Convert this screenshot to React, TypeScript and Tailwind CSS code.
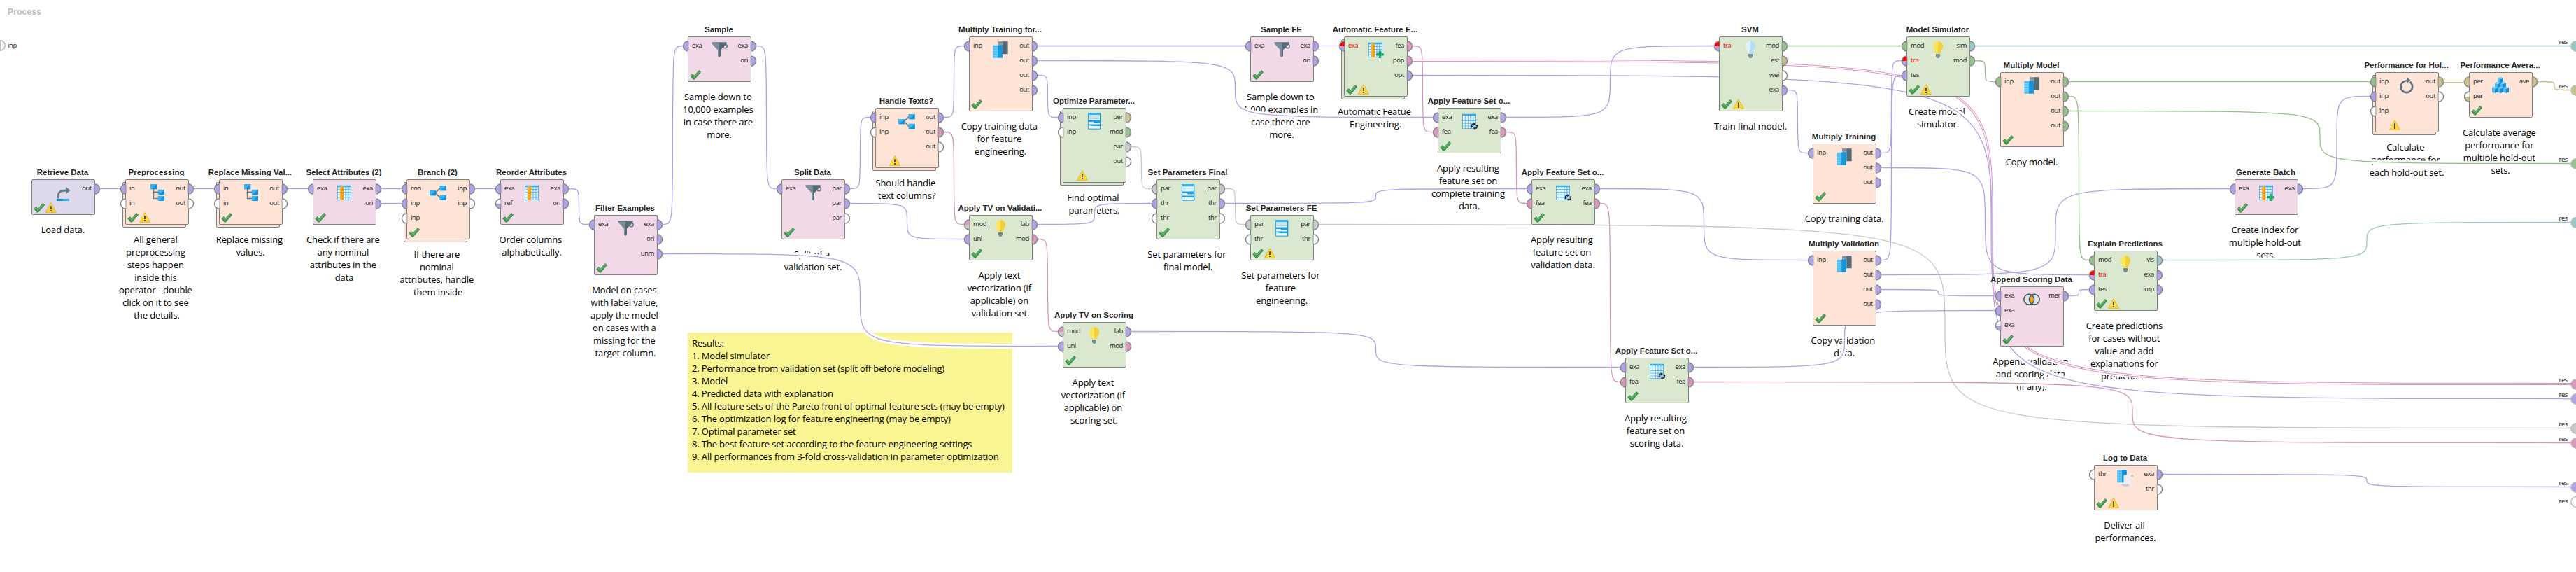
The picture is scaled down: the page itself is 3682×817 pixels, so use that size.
import React from 'react';

type Tone = 'data' | 'model' | 'fea' | 'perf' | 'io' | 'param' | 'none' | 'error';
type IconName = 'retrieve' | 'tree' | 'columns' | 'branch' | 'funnel' | 'stack' | 'form' | 'bulb' | 'coldBulb' | 'tablePlus' | 'tableSync' | 'venn' | 'loop' | 'cubes' | 'log';
type Port = { t: string; c: Tone; top?: Tone };
type Op = {
  id: string; x: number; y: number; h: number; bg: string; title: string; icon: IconName;
  ins: Port[]; outs: Port[]; ok?: boolean; warn?: boolean; sub?: boolean; note: string[];
};

const TONE: Record<Tone, string> = {
  data: '#b1a2e8', model: '#95bf8c', fea: '#d996be', perf: '#c9c08f', io: '#97c6cb', param: '#c9c9c9', none: '#ffffff', error: '#ff0000',
};
const PINK = 'bg-[#f1d9e7]';
const PEACH = 'bg-[#fde4d7]';
const GREEN = 'bg-[#d9e8ce]';
const LILAC = 'bg-[#ddd9ea]';

const p = (list: string): Port[] =>
  list ? list.split(' ').map((s) => { const [t, c, top] = s.split(':'); return { t, c: c as Tone, top: top as Tone | undefined }; }) : [];

const OPS: Op[] = [
  { id: 'ret', x: 45, y: 256, h: 51, bg: LILAC, title: 'Retrieve Data', icon: 'retrieve', ins: [], outs: p('out:data'), ok: true, warn: true, note: ['Load data.'] },
  { id: 'pre', x: 179, y: 256, h: 65, bg: PEACH, title: 'Preprocessing', icon: 'tree', ins: p('in:data in:none'), outs: p('out:data out:none'), ok: true, warn: true, sub: true, note: ['All general', 'preprocessing', 'steps happen', 'inside this', 'operator - double', 'click on it to see', 'the details.'] },
  { id: 'rep', x: 313, y: 256, h: 65, bg: PEACH, title: 'Replace Missing Val...', icon: 'tree', ins: p('in:data in:none'), outs: p('out:data out:none'), ok: true, sub: true, note: ['Replace missing', 'values.'] },
  { id: 'sel', x: 447, y: 256, h: 65, bg: PINK, title: 'Select Attributes (2)', icon: 'columns', ins: p('exa:data'), outs: p('exa:data ori:data'), ok: true, note: ['Check if there are', 'any nominal', 'attributes in the', 'data'] },
  { id: 'bra', x: 581, y: 256, h: 86, bg: PEACH, title: 'Branch (2)', icon: 'branch', ins: p('con:data inp:data inp:none'), outs: p('inp:data inp:none'), ok: true, sub: true, note: ['If there are', 'nominal', 'attributes, handle', 'them inside'] },
  { id: 'reo', x: 715, y: 256, h: 65, bg: PINK, title: 'Reorder Attributes', icon: 'columns', ins: p('exa:data ref:data:none'), outs: p('exa:data ori:data'), ok: true, note: ['Order columns', 'alphabetically.'] },
  { id: 'fil', x: 849, y: 307, h: 86, bg: PINK, title: 'Filter Examples', icon: 'funnel', ins: p('exa:data'), outs: p('exa:data ori:data unm:data'), ok: true, note: ['Model on cases', 'with label value,', 'apply the model', 'on cases with a', 'missing for the', 'target column.'] },
  { id: 'sam', x: 983, y: 52, h: 65, bg: PINK, title: 'Sample', icon: 'funnel', ins: p('exa:data'), outs: p('exa:data ori:data'), ok: true, note: ['Sample down to', '10,000 examples', 'in case there are', 'more.'] },
  { id: 'spl', x: 1117, y: 256, h: 86, bg: PINK, title: 'Split Data', icon: 'funnel', ins: p('exa:data'), outs: p('par:data par:data par:none'), ok: true, note: ['Split of a', 'validation set.'] },
  { id: 'han', x: 1251, y: 154, h: 86, bg: PEACH, title: 'Handle Texts?', icon: 'branch', ins: p('inp:data inp:none'), outs: p('out:data out:fea out:none'), warn: true, sub: true, note: ['Should handle', 'text columns?'] },
  { id: 'mfe', x: 1385, y: 52, h: 107, bg: PEACH, title: 'Multiply Training for...', icon: 'stack', ins: p('inp:data'), outs: p('out:data out:data out:data out:data'), ok: true, note: ['Copy training data', 'for feature', 'engineering.'] },
  { id: 'opt', x: 1519, y: 154, h: 107, bg: GREEN, title: 'Optimize Parameter...', icon: 'form', ins: p('inp:data inp:none'), outs: p('per:perf mod:model par:param out:none'), warn: true, sub: true, note: ['Find optimal', 'parameters.'] },
  { id: 'tvv', x: 1385, y: 307, h: 65, bg: GREEN, title: 'Apply TV on Validati...', icon: 'bulb', ins: p('mod:param:fea unl:data'), outs: p('lab:data mod:fea'), ok: true, note: ['Apply text', 'vectorization (if', 'applicable) on', 'validation set.'] },
  { id: 'tvs', x: 1519, y: 460, h: 65, bg: GREEN, title: 'Apply TV on Scoring', icon: 'bulb', ins: p('mod:param:fea unl:data'), outs: p('lab:data mod:fea'), ok: true, note: ['Apply text', 'vectorization (if', 'applicable) on', 'scoring set.'] },
  { id: 'spf', x: 1653, y: 256, h: 86, bg: GREEN, title: 'Set Parameters Final', icon: 'form', ins: p('par:param thr:data thr:none'), outs: p('par:param thr:data thr:none'), ok: true, note: ['Set parameters for', 'final model.'] },
  { id: 'spe', x: 1787, y: 307, h: 65, bg: GREEN, title: 'Set Parameters FE', icon: 'form', ins: p('par:param thr:none'), outs: p('par:param thr:none'), ok: true, warn: true, note: ['Set parameters for', 'feature', 'engineering.'] },
  { id: 'sfe', x: 1787, y: 52, h: 65, bg: PINK, title: 'Sample FE', icon: 'funnel', ins: p('exa:data'), outs: p('exa:data ori:data'), ok: true, note: ['Sample down to', '1,000 examples in', 'case there are', 'more.'] },
  { id: 'afe', x: 1921, y: 52, h: 86, bg: GREEN, title: 'Automatic Feature E...', icon: 'tablePlus', ins: p('exa:data:error'), outs: p('fea:fea pop:fea opt:data'), ok: true, warn: true, sub: true, note: ['Automatic Featue', 'Engineering.'] },
  { id: 'fs1', x: 2055, y: 154, h: 65, bg: GREEN, title: 'Apply Feature Set o...', icon: 'tableSync', ins: p('exa:data fea:fea'), outs: p('exa:data fea:fea'), ok: true, note: ['Apply resulting', 'feature set on', 'complete training', 'data.'] },
  { id: 'fs2', x: 2189, y: 256, h: 65, bg: GREEN, title: 'Apply Feature Set o...', icon: 'tableSync', ins: p('exa:data fea:fea'), outs: p('exa:data fea:fea'), ok: true, note: ['Apply resulting', 'feature set on', 'validation data.'] },
  { id: 'fs3', x: 2323, y: 511, h: 65, bg: GREEN, title: 'Apply Feature Set o...', icon: 'tableSync', ins: p('exa:data fea:fea'), outs: p('exa:data fea:fea'), ok: true, note: ['Apply resulting', 'feature set on', 'scoring data.'] },
  { id: 'svm', x: 2457, y: 52, h: 107, bg: GREEN, title: 'SVM', icon: 'coldBulb', ins: p('tra:data:error'), outs: p('mod:model est:perf wei:none exa:data'), ok: true, warn: true, note: ['Train final model.'] },
  { id: 'mtr', x: 2591, y: 205, h: 86, bg: PEACH, title: 'Multiply Training', icon: 'stack', ins: p('inp:data'), outs: p('out:data out:data out:data'), ok: true, note: ['Copy training data.'] },
  { id: 'mva', x: 2591, y: 358, h: 107, bg: PEACH, title: 'Multiply Validation', icon: 'stack', ins: p('inp:data'), outs: p('out:data out:data out:data out:data'), ok: true, note: ['Copy validation', 'data.'] },
  { id: 'sim', x: 2725, y: 52, h: 86, bg: GREEN, title: 'Model Simulator', icon: 'bulb', ins: p('mod:model tra:data:error tes:data'), outs: p('sim:io mod:model'), ok: true, warn: true, note: ['Create model', 'simulator.'] },
  { id: 'mmo', x: 2859, y: 103, h: 107, bg: PEACH, title: 'Multiply Model', icon: 'stack', ins: p('inp:model'), outs: p('out:model out:model out:model out:model'), ok: true, note: ['Copy model.'] },
  { id: 'app', x: 2859, y: 409, h: 86, bg: PINK, title: 'Append Scoring Data', icon: 'venn', ins: p('exa:data exa:data exa:data:none'), outs: p('mer:data'), ok: true, note: ['Append validation', 'and scoring data', '(if any).'] },
  { id: 'exp', x: 2993, y: 358, h: 86, bg: GREEN, title: 'Explain Predictions', icon: 'bulb', ins: p('mod:model tra:data:error tes:data'), outs: p('vis:io exa:data imp:data'), ok: true, warn: true, note: ['Create predictions', 'for cases without', 'value and add', 'explanations for', 'predictions.'] },
  { id: 'log', x: 2993, y: 664, h: 65, bg: PEACH, title: 'Log to Data', icon: 'log', ins: p('thr:none'), outs: p('exa:data thr:none'), ok: true, warn: true, note: ['Deliver all', 'performances.'] },
  { id: 'gen', x: 3194, y: 256, h: 51, bg: PINK, title: 'Generate Batch', icon: 'tablePlus', ins: p('exa:data'), outs: p('exa:data'), ok: true, note: ['Create index for', 'multiple hold-out', 'sets.'] },
  { id: 'pho', x: 3395, y: 103, h: 86, bg: PEACH, title: 'Performance for Hol...', icon: 'loop', ins: p('inp:model inp:data inp:none'), outs: p('out:perf out:none'), warn: true, sub: true, note: ['Calculate', 'performance for', 'each hold-out set.'] },
  { id: 'pav', x: 3529, y: 103, h: 65, bg: PEACH, title: 'Performance Avera...', icon: 'cubes', ins: p('per:perf per:perf:none'), outs: p('ave:perf'), ok: true, note: ['Calculate average', 'performance for', 'multiple hold-out', 'sets.'] },
];

const RESULTS: { y: number; c: Tone }[] = [
  { y: 65.5, c: 'io' }, { y: 128.5, c: 'perf' }, { y: 233.5, c: 'model' }, { y: 317.5, c: 'io' }, { y: 548.5, c: 'fea' },
  { y: 569.5, c: 'data' }, { y: 611.5, c: 'param' }, { y: 632.5, c: 'fea' }, { y: 695.5, c: 'data' }, { y: 716.5, c: 'none' },
];

// "operator.port > operator.port"; the target "res.n" is the n-th result port on the right edge.
const WIRES = [
  'ret.0>pre.0', 'pre.0>rep.0', 'rep.0>sel.0', 'sel.0>bra.0', 'sel.1>bra.1', 'bra.0>reo.0', 'reo.0>fil.0', 'fil.0>sam.0',
  'fil.2>tvs.1', 'sam.0>spl.0', 'spl.0>han.0', 'spl.1>tvv.1', 'han.0>mfe.0', 'han.1>tvv.0', 'tvv.1>tvs.0', 'mfe.0>sfe.0',
  'mfe.1>fs1.0', 'mfe.2>opt.0', 'opt.2>spf.0', 'tvv.0>spf.1', 'spf.0>spe.0', 'spf.1>fs2.0', 'spe.0>res.6', 'sfe.0>afe.0',
  'afe.0>fs1.1', 'afe.1>res.4*', 'afe.2>res.5', 'fs1.0>svm.0', 'fs1.1>fs2.1', 'fs2.0>mva.0', 'fs2.1>fs3.1', 'tvs.0>fs3.0',
  'fs3.0>app.1', 'fs3.1>res.7', 'svm.0>sim.0', 'svm.3>mtr.0', 'mtr.0>sim.1', 'mtr.1>exp.1', 'mva.0>sim.2', 'mva.1>gen.0',
  'mva.2>app.0', 'app.0>exp.2', 'sim.0>res.0', 'sim.1>mmo.0', 'mmo.0>pho.0', 'mmo.1>exp.0', 'mmo.2>res.2', 'gen.0>pho.1',
  'pho.0>pav.0*', 'pav.0>res.1', 'exp.0>res.3', 'log.0>res.8',
];

const byId = new Map(OPS.map((o) => [o.id, o]));

const PATHS = WIRES.map((w) => {
  const double = w.endsWith('*');
  const [from, to] = w.replace('*', '').split('>');
  const [fi, fp] = from.split('.');
  const [ti, tp] = to.split('.');
  const a = byId.get(fi)!;
  const x1 = a.x + 98;
  const y1 = a.y + 13.5 + 21 * Number(fp);
  const b = byId.get(ti);
  const x2 = b ? b.x - 7 : 3675;
  const y2 = b ? b.y + 13.5 + 21 * Number(tp) : RESULTS[Number(tp)].y;
  const cx = (x1 + x2) / 2;
  const cy = (y1 + y2) / 2;
  const d = y1 === y2
    ? `M${x1} ${y1}H${x2}`
    : `M${x1} ${y1}C${cx} ${y1} ${cx} ${y1} ${cx} ${cy}C${cx} ${y2} ${cx} ${y2} ${x2} ${y2}`;
  return { key: w, d, double, color: TONE[a.outs[Number(fp)].c] };
});

function Wires() {
  return (
    <svg className="absolute top-0 left-0" width="3682" height="817" viewBox="0 0 3682 817" fill="none">
      <g stroke="#fff" strokeWidth="7">
        {PATHS.map((w) => <path key={w.key} d={w.d} />)}
      </g>
      {PATHS.map((w) => (
        <g key={w.key}>
          <path d={w.d} stroke={w.color} strokeWidth={w.double ? 3.2 : 1.3} />
          {w.double && <path d={w.d} stroke="#fff" strokeWidth="1.2" />}
        </g>
      ))}
    </svg>
  );
}

function HalfPort({ side, port }: { side: 'l' | 'r'; port: Port }) {
  const cx = side === 'l' ? 8.5 : 0.5;
  const sweep = side === 'l' ? 0 : 1;
  const ex = side === 'l' ? 1.5 : 7.5;
  return (
    <svg width="9" height="16" viewBox="0 0 9 16" className={side === 'l' ? '-ml-[9px] shrink-0 overflow-visible' : '-mr-[9px] shrink-0 overflow-visible'}>
      <path d={`M${cx} 1A7 7 0 0 ${sweep} ${cx} 15Z`} fill={TONE[port.c]} />
      {port.top && <path d={`M${cx} 1A7 7 0 0 ${sweep} ${ex} 8H${cx}Z`} fill={TONE[port.top]} />}
      <path d={side === 'l' ? 'M9.5 1.5V14.5' : 'M-.5 1.5V14.5'} stroke="#8b84a0" strokeOpacity=".35" />
      <path d={`M${cx} 1A7 7 0 0 ${sweep} ${cx} 15`} fill="none" stroke="#868686" strokeWidth="1.4" />
    </svg>
  );
}

function Table({ orange }: { orange?: boolean }) {
  return (
    <g>
      <rect x="2" y="2.7" width="20" height="21.3" fill="#fff" />
      <rect x="13" y="5" width="9" height="19" fill="#dff2fd" />
      <path d="M2.5 5V24M6.3 5V24M10.3 5V24M14 5V24M17.8 5V24M21.5 5V24M2 8.5H22M2 12.5H22M2 16.2H22M2 20H22M2 23.5H22" stroke="#4ab5ee" strokeWidth=".9" />
      <rect x="2" y="2.7" width="20" height="2.6" fill="#35ade8" />
      {orange && <><rect x="6" y="4" width="5.3" height="20" fill="#f49b0f" /><rect x="6" y="4" width="2.4" height="20" fill="#fbb034" /></>}
    </g>
  );
}

function Tile({ x, y }: { x: number; y: number }) {
  return (
    <g>
      <rect x={x} y={y} width="9.2" height="7.2" fill="#36b4f0" />
      <path d={`M${x + 9.2} ${y}V${y + 7.2}H${x + 1}Z`} fill="#1590d8" />
    </g>
  );
}

function Slab({ x, y, l, r }: { x: number; y: number; l: string; r: string }) {
  return (
    <g>
      <rect x={x} y={y} width="7" height="18" fill={l} />
      <rect x={x + 6.8} y={y} width="6.8" height="18" fill={r} />
      <path d={`M${x} ${y + 3.8}h6.5M${x} ${y + 7.4}h6.5M${x} ${y + 11}h6.5M${x} ${y + 14.6}h6.5`} stroke="#fff" strokeOpacity=".45" strokeWidth=".7" />
    </g>
  );
}

function Cube({ x, y }: { x: number; y: number }) {
  return (
    <g>
      <path d={`M${x} ${y + 1.8}L${x + 4} ${y}L${x + 8} ${y + 1.8}L${x + 4} ${y + 3.4}Z`} fill="#74c9f4" />
      <path d={`M${x} ${y + 1.8}L${x + 4} ${y + 3.4}V${y + 9.6}L${x} ${y + 8}Z`} fill="#4cb9ef" />
      <path d={`M${x + 8} ${y + 1.8}L${x + 4} ${y + 3.4}V${y + 9.6}L${x + 8} ${y + 8}Z`} fill="#118ed6" />
    </g>
  );
}

function Bulb({ a, b }: { a: string; b: string }) {
  return (
    <g>
      <path d="M12 1A7.2 7.4 0 0 0 4.8 8.4C4.8 12 8 14 8.4 18.6H12Z" fill={a} />
      <path d="M12 1A7.2 7.4 0 0 1 19.2 8.4C19.2 12 16 14 15.6 18.6H12Z" fill={b} />
      <path d="M9 19h6v3.6L13.4 25h-2.8L9 22.6Z" fill="#78909c" />
      <path d="M9 20.8h6" stroke="#5f7682" strokeWidth=".8" />
    </g>
  );
}

function Drawing({ name }: { name: IconName }) {
  switch (name) {
    case 'retrieve':
      return (
        <g>
          <path d="M5 21.5V19C5 12 9 10 17 10" fill="none" stroke="#607d8b" strokeWidth="2.8" />
          <path d="M16.5 5L22.3 10L16.5 15Z" fill="#607d8b" />
          <rect x="3" y="22" width="18" height="3" fill="#29b0f0" /><rect x="3" y="22" width="9" height="3" fill="#0a8ad8" />
        </g>
      );
    case 'tree':
      return (
        <g>
          <path d="M7.5 8V21.5H14M7.5 12.3H14" fill="none" stroke="#6f7b82" strokeWidth="1.4" />
          <Tile x={3} y={1} /><Tile x={13.8} y={8.8} /><Tile x={13.8} y={17.8} />
        </g>
      );
    case 'columns': return <Table orange />;
    case 'branch':
      return (
        <g>
          <path d="M15 6.5L8.5 13.5L15 20.5" fill="none" stroke="#5f6e76" strokeWidth="1.3" />
          <Tile x={0} y={10} /><Tile x={14.4} y={3} /><Tile x={14.4} y={16.7} />
        </g>
      );
    case 'funnel':
      return (
        <g>
          <circle cx="20.4" cy="8" r="2.8" fill="none" stroke="#607580" strokeWidth="1.5" />
          <path d="M1.5 2.5H12V24.2L10 22.5V13.5L1.5 4.5Z" fill="#78909c" />
          <path d="M12 2.5H22.5V4.5L14 13.5V22L12 24.2Z" fill="#546a76" />
          <path d="M1.5 3h21" stroke="#5b707b" strokeWidth="1" />
        </g>
      );
    case 'stack':
      return <g><Slab x={9} y={1.2} l="#78909c" r="#546a76" /><Slab x={1.3} y={6.7} l="#4fc0f5" r="#1296dd" /></g>;
    case 'form':
      return (
        <g>
          <rect x="3.5" y="1.8" width="17" height="22.4" fill="#eaf7fe" stroke="#35ade8" strokeWidth="1.2" />
          <rect x="3" y="1.2" width="18" height="3" fill="#35b5f2" />
          <path d="M5 7H19M5 9.6H19" stroke="#8fd0f3" strokeWidth=".9" />
          <path d="M4 11.5H20V15.5H12L4 14Z" fill="#1e9fe3" />
          <rect x="5" y="14.2" width="6" height="2" fill="#fff" />
          <path d="M4 17.6H20V20H11L4 19Z" fill="#1e9fe3" />
          <path d="M20.8 2V24" stroke="#1590d8" strokeWidth="1" />
        </g>
      );
    case 'bulb': return <Bulb a="#f9e560" b="#f3cf3a" />;
    case 'coldBulb': return <Bulb a="#def2fd" b="#b0e0fa" />;
    case 'tablePlus':
      return <g><Table orange /><path d="M16.8 14.6h3.4v3.4h3.6v3.4h-3.6v3.6h-3.4v-3.6h-3.6v-3.4h3.6Z" fill="#1fae62" /></g>;
    case 'tableSync':
      return (
        <g>
          <Table />
          <path d="M18.6 17.3h-1.1a1.8 1.8 0 0 0-1.8 1.8v2.3M20.2 23.1h1.1a1.8 1.8 0 0 0 1.8-1.8v-2.3" fill="none" stroke="#222" strokeWidth="1.5" />
          <path d="M18.3 15.2l2.7 2.1-2.7 2.1ZM20.5 25.2l-2.7-2.1 2.7-2.1Z" fill="#222" />
          <path d="M14 20.6h3.4l-1.7 2.2ZM21.4 19.8h3.4l-1.7-2.2Z" fill="#222" />
        </g>
      );
    case 'venn':
      return (
        <g>
          <circle cx="8.2" cy="12.7" r="7.4" fill="#dfe6ea" /><circle cx="15.8" cy="12.7" r="7.4" fill="#dfe6ea" />
          <path d="M12 6.4A7.4 7.4 0 0 1 12 19A7.4 7.4 0 0 1 12 6.4Z" fill="#f5a31a" />
          <circle cx="8.2" cy="12.7" r="7.4" fill="none" stroke="#455a64" strokeWidth="1.5" />
          <circle cx="15.8" cy="12.7" r="7.4" fill="none" stroke="#455a64" strokeWidth="1.5" />
        </g>
      );
    case 'loop':
      return (
        <g>
          <path d="M8.5 7.2A8.3 8.3 0 1 0 16.5 7.9" fill="none" stroke="#5c727e" strokeWidth="2.6" />
          <path d="M8 7.2L12 6.2" stroke="#5c727e" strokeWidth="2.4" />
          <path d="M12 1.2L17.4 5.4L12 10.2Z" fill="#5c727e" />
        </g>
      );
    case 'cubes':
      return <g><Cube x={8} y={0.8} /><Cube x={4} y={7.6} /><Cube x={12} y={7.6} /><Cube x={0} y={14.4} /><Cube x={8} y={14.4} /><Cube x={16} y={14.4} /></g>;
    case 'log':
      return (
        <g>
          <Slab x={0.2} y={1.3} l="#4fc0f5" r="#1296dd" />
          <path d="M9.5 9.5Q9.5 8 11 8H22Q20 8.5 20 10.5V22H9.5Z" fill="#eceff1" />
          <path d="M22 8q1.6.6 1.2 2.8H20Q20 8.4 22 8Z" fill="#b0bec5" />
          <path d="M6.5 21.8H17V24.4H8.2Q6.5 24 6.5 21.8Z" fill="#c3ced4" />
        </g>
      );
  }
}

function Check() {
  return (
    <svg width="16" height="14" viewBox="0 0 16 14">
      <path d="M.8 8.2L3.8 5.6L6.3 8.4L13 .6L15.6 2.8L6.6 13.2L4.6 13Z" fill="#43a053" stroke="#2f7d3e" strokeWidth=".8" />
      <path d="M2 8L3.8 6.7L6.4 9.7L13.2 1.9" fill="none" stroke="#7cc784" strokeWidth=".9" />
    </svg>
  );
}

function Warn() {
  return (
    <svg width="16" height="15" viewBox="0 0 16 15">
      <path d="M8 .6L15.6 14.4H.4Z" fill="#fbd63c" stroke="#e0b420" strokeWidth=".8" strokeLinejoin="round" />
      <path d="M8 5.2V10" stroke="#4a4a4a" strokeWidth="1.9" /><path d="M8 11V13" stroke="#4a4a4a" strokeWidth="1.9" />
    </svg>
  );
}

const LABEL = 'pb-[1.5px] text-[9.5px] leading-[15px] tracking-[-0.4px]';

function PortRow({ side, port }: { side: 'l' | 'r'; port: Port }) {
  const tone = port.top === 'error' ? 'text-[#ff0000]' : 'text-[#1c1c1c]';
  return side === 'l' ? (
    <div className="flex h-[21px] items-center gap-[5px]">
      <HalfPort side="l" port={port} />
      <span className={`${LABEL} ${tone}`}>{port.t}</span>
    </div>
  ) : (
    <div className="flex h-[21px] items-center justify-end gap-1">
      <span className={`${LABEL} ${tone}`}>{port.t}</span>
      <HalfPort side="r" port={port} />
    </div>
  );
}

function Operator({ op }: { op: Op }) {
  return (
    <div className="absolute w-[91px]" style={{ left: op.x, top: op.y, height: op.h }}>
      {op.sub && <div className={`absolute top-1 -left-1 h-full w-full rounded-[2px] border border-[#7f7f7f] ${op.bg}`} />}
      <div className="absolute inset-x-0 -top-[17px] flex justify-center pr-[2px]">
        <span className="text-[11.5px] leading-[14px] font-bold whitespace-nowrap text-[#262626] [font-family:'Liberation_Sans',Arial,sans-serif]">{op.title}</span>
      </div>
      <div className={`relative flex h-full justify-between rounded-[2px] border border-[#7f7f7f] pt-[2px] ${op.bg}`}>
        <div className="flex flex-col">{op.ins.map((q, i) => <PortRow key={i} side="l" port={q} />)}</div>
        <div className="flex flex-col">{op.outs.map((q, i) => <PortRow key={i} side="r" port={q} />)}</div>
        <svg className="absolute top-[5px] left-8 overflow-visible" width="24" height="26" viewBox="0 0 24 26"><Drawing name={op.icon} /></svg>
        <div className="absolute bottom-[2px] left-[2px] flex h-[15px] items-center gap-px">
          <div className="w-4">{op.ok && <Check />}</div>
          {op.warn && <Warn />}
        </div>
      </div>
    </div>
  );
}

function Comment({ op }: { op: Op }) {
  return (
    <div className="absolute flex w-[130px] flex-col items-center" style={{ left: op.x - 20, top: op.y + op.h + 12 }}>
      {op.note.map((line, i) => (
        <span key={i} className="text-[13px] leading-[18px] tracking-[-0.1px] whitespace-pre text-black">
          {i < op.note.length - 1 ? line + ' ' : line}
        </span>
      ))}
    </div>
  );
}

const NOTES = [
  'Results:',
  '1. Model simulator',
  '2. Performance from validation set (split off before modeling)',
  '3. Model',
  '4. Predicted data with explanation',
  '5. All feature sets of the Pareto front of optimal feature sets (may be empty)',
  '6. The optimization log for feature engineering (may be empty)',
  '7. Optimal parameter set',
  '8. The best feature set according to the feature engineering settings',
  '9. All performances from 3-fold cross-validation in parameter optimization',
];

export default function App() {
  return (
    <main className="relative h-[817px] w-[3682px] overflow-hidden bg-white [font-family:'Open_Sans','Noto_Sans',sans-serif]">
      <h1 className="pt-[10px] pl-[11px] text-[12px] leading-[15px] font-bold tracking-[0.2px] text-[#bdbdbd] [font-family:'Liberation_Sans',Arial,sans-serif]">Process</h1>

      {OPS.map((op) => <Comment key={op.id} op={op} />)}

      <section className="absolute top-[475px] left-[983px] h-[200px] w-[464px] bg-[#f9f593] pt-[6px] pl-[6px]">
        {NOTES.map((n) => (
          <p key={n} className="text-[13px] leading-[18px] tracking-[-0.14px] whitespace-nowrap text-black">{n}</p>
        ))}
      </section>

      <Wires />

      <div className="absolute top-[57px] left-0 flex items-center gap-[2px]">
        <svg width="9" height="16" viewBox="0 0 9 16">
          <circle cx="0" cy="8" r="7.2" fill="#fff" stroke="#bdbdbd" strokeWidth="1.6" />
          <path d="M.5 1V15" stroke="#bdbdbd" />
        </svg>
        <span className={`${LABEL} text-[#1c1c1c]`}>inp</span>
      </div>

      {RESULTS.map((r) => (
        <div key={r.y} className="absolute right-0 flex h-4 items-center gap-1" style={{ top: r.y - 8 }}>
          <span className={r.c === 'none' ? `${LABEL} text-[#1c1c1c]` : `${LABEL} -mt-[10px] text-[#1c1c1c]`}>res</span>
          <svg width="8" height="16" viewBox="0 0 8 16">
            <circle cx="8" cy="8" r="7.2" fill={TONE[r.c]} stroke="#bdbdbd" strokeWidth="1.5" />
          </svg>
        </div>
      ))}

      {OPS.map((op) => <Operator key={op.id} op={op} />)}
    </main>
  );
}
